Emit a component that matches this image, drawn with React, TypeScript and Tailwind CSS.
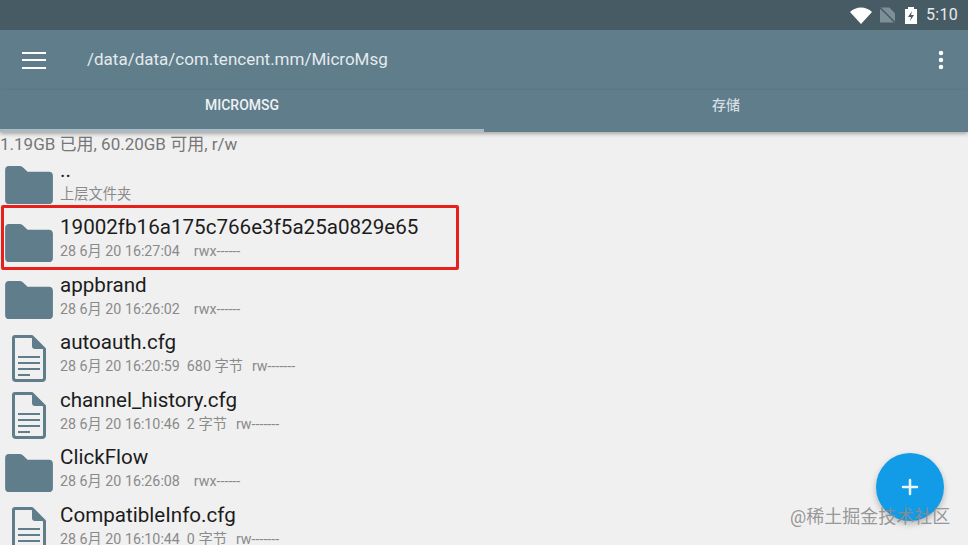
import { MoreVertical, Plus } from "lucide-react";

interface Entry {
  name: string;
  date?: string;
  size?: string;
  perm?: string;
  sub?: string;
  kind: "folder" | "file";
}

const entries: Entry[] = [
  { name: "..", sub: "上层文件夹", kind: "folder" },
  { name: "19002fb16a175c766e3f5a25a0829e65", date: "28 6月 20 16:27:04", perm: "rwx------", kind: "folder" },
  { name: "appbrand", date: "28 6月 20 16:26:02", perm: "rwx------", kind: "folder" },
  { name: "autoauth.cfg", date: "28 6月 20 16:20:59", size: "680 字节", perm: "rw-------", kind: "file" },
  { name: "channel_history.cfg", date: "28 6月 20 16:10:46", size: "2 字节", perm: "rw-------", kind: "file" },
  { name: "ClickFlow", date: "28 6月 20 16:26:08", perm: "rwx------", kind: "folder" },
  { name: "CompatibleInfo.cfg", date: "28 6月 20 16:10:44", size: "0 字节", perm: "rw-------", kind: "file" },
];

const FolderIcon = () => (
  <svg width="49" height="39" viewBox="0 0 50 40" className="block">
    <path
      d="M4 0H15C17 0 18 1 19.5 2.5L23 6H45C47.5 6 49 7.5 49 10V35C49 37.5 47.5 39 45 39H4C1.500 39 0 37.500 0 35V4C0 1.500 1.500 0 4 0Z"
      fill="#607d8b"
    />
  </svg>
);

const FileIcon = () => (
  <svg width="34" height="47" viewBox="0 0 34 47" className="block">
    <path
      d="M3 1.500H20L32.500 14V43C32.500 44.500 31.500 45.500 30 45.500H4C2.500 45.500 1.500 44.500 1.500 43V3C1.500 2 2 1.500 3 1.500Z"
      fill="#f0f0f0"
      stroke="#607d8b"
      strokeWidth="3"
      strokeLinejoin="round"
    />
    <path d="M20 1.500L32.500 14H23C21 14 20 13 20 11Z" fill="#607d8b" />
    <path d="M6 22H28M6 28H28M6 34H28M6 40H18" stroke="#607d8b" strokeWidth="2" />
  </svg>
);

const Row = ({ entry }: { entry: Entry }) => (
  <div className="flex h-[57.5px] shrink-0">
    <div className={`w-[60px] shrink-0 flex items-center justify-center pt-[4px] ${entry.kind === "folder" ? "pr-[2px]" : "pr-[2px]"}`}>
      {entry.kind === "folder" ? <FolderIcon /> : <FileIcon />}
    </div>
    <div className="min-w-0">
      <div className="text-[20.6px] leading-[26px] text-[#1c1c1c] mt-[1.500px]">{entry.name}</div>
      <div className="flex text-[14.25px] leading-[20px] text-[#8a8a8a] mt-[1px]">
        {entry.sub ? (
          <span>{entry.sub}</span>
        ) : (
          <>
            <span>{entry.date}</span>
            <span className={entry.size ? "ml-[7px]" : "ml-[14px]"}>{entry.size}</span>
            <span className={entry.size ? "ml-[9px]" : ""}>{entry.perm}</span>
          </>
        )}
      </div>
    </div>
  </div>
);

export default function App() {
  return (
    <div
      className="relative w-[968px] h-[545px] overflow-hidden bg-[#f0f0f0] flex flex-col"
      style={{ fontFamily: "Roboto, 'Noto Sans CJK SC', sans-serif" }}
    >
      {/* status bar */}
      <div className="h-[30px] shrink-0 bg-[#465b64] flex items-center justify-end pr-[10px]">
        <svg width="22" height="17" viewBox="0 0 22 17">
          <path d="M0 5C6 -1 16 -1 22 5L11 17Z" fill="#ffffff" />
        </svg>
        <svg width="15" height="16" viewBox="0 0 16 16" className="ml-[8px]">
          <path d="M0 0H10L16 6V16H0Z" fill="#7d8f97" />
          <path d="M0 0L16 16" stroke="#465b64" strokeWidth="1.500" />
        </svg>
        <svg width="12" height="17" viewBox="0 0 12 17" className="ml-[10px]">
          <path d="M0 2H3V0H9V2H12V17H0Z" fill="#ffffff" />
          <path d="M7 4L3 10H6L5 14L9 8H6Z" fill="#465b64" />
        </svg>
        <span className="ml-[9px] text-[16px] text-[#e6ebed] tracking-[0.3px]">5:10</span>
      </div>

      {/* toolbar */}
      <div className="h-[60px] shrink-0 bg-[#607d8b] flex items-center">
        <div className="ml-[22px] w-[24px] flex flex-col gap-[5.500px]">
          <div className="h-[2px] bg-white" />
          <div className="h-[2px] bg-white" />
          <div className="h-[2px] bg-white" />
        </div>
        <div className="ml-[41px] text-[17px] text-[#e4eaed]">/data/data/com.tencent.mm/MicroMsg</div>
        <MoreVertical className="ml-auto mr-[15px] text-white" size={24} strokeWidth={2.500} />
      </div>

      {/* tabs */}
      <div className="h-[42px] shrink-0 bg-[#607d8b] flex relative shadow-[0_2px_4px_rgba(0,0,0,0.3)] z-10">
        <div className="w-1/2 flex items-center justify-center pb-[12px] text-[14px] font-medium text-[#eef2f4]">MICROMSG</div>
        <div className="w-1/2 flex items-center justify-center pb-[12px] text-[14px] font-medium text-[#d5dee2]">存储</div>
        <div className="absolute left-0 bottom-0 w-1/2 h-[3px] bg-[#a9bac2]" />
      </div>

      {/* storage line */}
      <div className="h-[22px] shrink-0 text-[17px] leading-[24px] text-[#777777]">1.19GB 已用, 60.20GB 可用, r/w</div>

      {/* file list */}
      <div className="flex flex-col mt-[1px]">
        {entries.map((entry) => (
          <Row key={entry.name} entry={entry} />
        ))}
      </div>

      {/* highlight */}
      <div className="absolute left-[1px] top-[205px] w-[458px] h-[65px] border-[3px] border-[#e8201c] rounded-[2px]" />

      {/* fab */}
      <div className="absolute left-[876px] top-[453px] w-[68px] h-[68px] rounded-full bg-[#129be6] shadow-[0_3px_6px_rgba(0,0,0,0.25)] flex items-center justify-center">
        <Plus className="text-[#e8f5fd]" size={24} strokeWidth={2.500} />
      </div>

      {/* watermark */}
      <div className="absolute left-[790px] top-[505px] text-[18px] leading-[24px] text-[#8c8c8c]/90 whitespace-nowrap">@稀土掘金技术社区</div>
    </div>
  );
}
